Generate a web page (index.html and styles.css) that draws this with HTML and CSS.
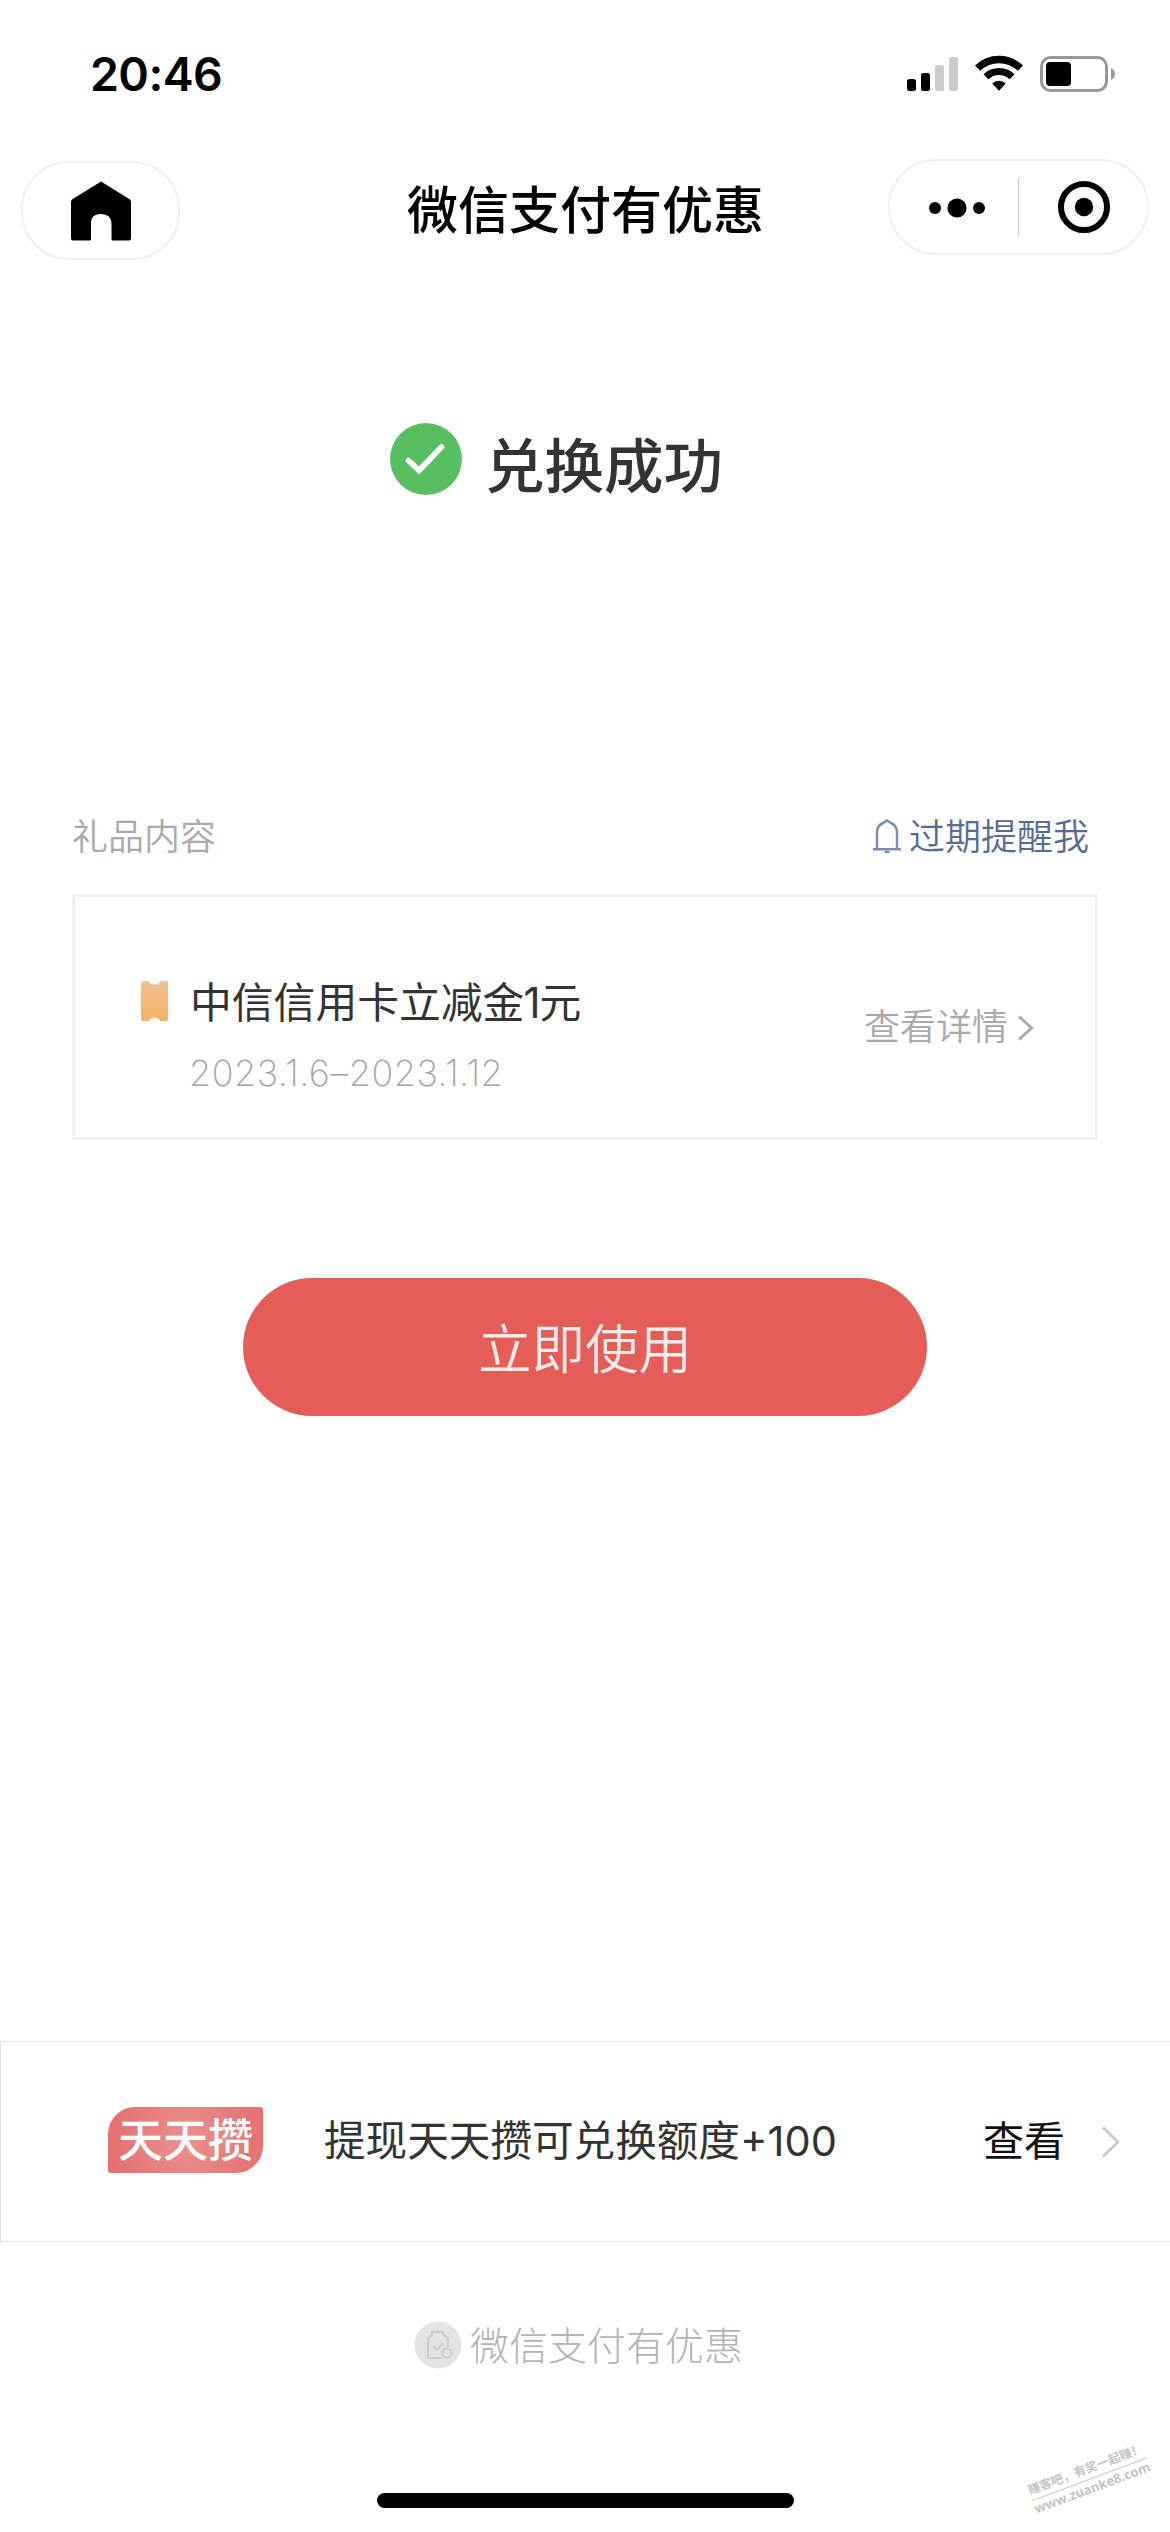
FILE: index.html
```html
<!DOCTYPE html>
<html lang="zh-CN">
<head>
<meta charset="utf-8">
<title>微信支付有优惠</title>
<link rel="stylesheet" href="styles.css">
</head>
<body>
<div class="screen">
  <header class="status">
    <span class="clock">20:46</span>
    <svg class="signal" width="52" height="36" viewBox="0 0 52 36">
      <rect x="0" y="22" width="9" height="12" rx="2.5"/>
      <rect x="14" y="16" width="9" height="18" rx="2.5"/>
      <rect x="28" y="8" width="9" height="26" rx="2.5" fill="#ccc"/>
      <rect x="42" y="0" width="9" height="34" rx="2.5" fill="#ccc"/>
    </svg>
    <svg class="wifi" width="48" height="36" viewBox="0 0 48 36">
      <path d="M2.6 13.2A30.5 30.5 0 0 1 45.4 13.2" fill="none" stroke="#000" stroke-width="7.4"/>
      <path d="M11 21.8A18.5 18.5 0 0 1 37 21.8" fill="none" stroke="#000" stroke-width="7"/>
      <path d="M17.2 28.6A9.8 9.8 0 0 1 30.8 28.6L24 35.8Z"/>
    </svg>
    <svg class="battery" width="76" height="36" viewBox="0 0 76 36">
      <rect x="1.5" y="1.5" width="65" height="33" rx="9" fill="none" stroke="#999" stroke-width="3"/>
      <rect x="6" y="6" width="25" height="24" rx="4"/>
      <path d="M71 12.2Q75 14 75 18T71 23.8Z" fill="#999"/>
    </svg>
  </header>

  <nav class="nav">
    <div class="home">
      <svg width="60" height="60" viewBox="0 0 60 60">
        <path d="M30 0.5L59 18.500Q60 19.500 60 21V57.500Q60 59.500 58 59.500H42Q40.500 59.500 40.500 58V43Q40.500 33 30 33T20 43V58Q20 59.500 18.500 59.500H2Q0 59.500 0 57.500V21Q0 19.500 1 18.500Z"/>
      </svg>
    </div>
    <h1 class="title">微信支付有优惠</h1>
    <div class="capsule">
      <svg class="dots" width="58" height="20" viewBox="0 0 58 20"><circle cx="7" cy="10" r="6"/><circle cx="29" cy="10" r="9.600"/><circle cx="51" cy="10" r="6"/></svg>
      <i class="divider"></i>
      <svg class="target" width="52" height="52" viewBox="0 0 52 52"><circle cx="26" cy="26" r="23" fill="none" stroke="#000" stroke-width="6"/><circle cx="26" cy="26" r="9.200"/></svg>
    </div>
  </nav>

  <section class="result">
    <svg width="72" height="72" viewBox="0 0 72 72"><circle cx="36" cy="36" r="36" fill="#58bf60"/><path d="M18.500 37.500L29 47.500L51.500 24" fill="none" stroke="#fff" stroke-width="5.500" stroke-linecap="round"/></svg>
    <h2 class="result-text">兑换成功</h2>
  </section>

  <section class="gift">
    <div class="gift-head">
      <span class="muted">礼品内容</span>
      <span class="remind">
        <svg width="30" height="34" viewBox="0 0 30 34" fill="none" stroke="#7d8cb0" stroke-width="2.400"><path d="M1 30.300H29M5 30V13.500Q5 6 12 3.500L15 1.500L18 3.500Q25 6 25 13.500V30"/><path d="M12.500 33H17.500"/></svg>
        过期提醒我
      </span>
    </div>
    <div class="card">
      <svg class="ticket" width="27" height="40" viewBox="0 0 27 39" preserveAspectRatio="none">
        <defs><linearGradient id="tk" x1="0" y1="0" x2="0" y2="1"><stop offset="0" stop-color="#f2c195"/><stop offset="1" stop-color="#f3b062"/></linearGradient></defs>
        <path d="M2 0H7.500Q9 3.500 13.500 3.500T19.500 0H25Q27 0 27 2V37Q27 39 25 39H19Q17.500 35.500 13.500 35.500T8 39H2Q0 39 0 37V2Q0 0 2 0Z" fill="url(#tk)"/>
      </svg>
      <div class="coupon">
        <div class="coupon-name">中信信用卡立减金<span class="num">1</span>元</div>
        <div class="coupon-date">2023.1.6–2023.1.12</div>
      </div>
      <div class="detail">查看详情
        <svg width="17" height="26" viewBox="0 0 17 26" fill="none" stroke="#aaa" stroke-width="3"><path d="M2 1.500L14.500 13L2 24.500"/></svg>
      </div>
    </div>
  </section>

  <button class="use">立即使用</button>

  <section class="promo">
    <span class="badge">天天攒</span>
    <span class="promo-text">提现天天攒可兑换额度<span class="num">+100</span></span>
    <span class="promo-link">查看</span>
    <svg width="18" height="32" viewBox="0 0 18 32" fill="none" stroke="#c8c8c8" stroke-width="2.600"><path d="M1 1.500L16 16L1 30.500"/></svg>
  </section>

  <footer class="brand">
    <svg width="48" height="48" viewBox="0 0 48 48"><circle cx="24" cy="24" r="23.500" fill="#e4e4e4"/><g fill="none" stroke="#cdcdcd" stroke-width="2"><path d="M28 37H14V19Q14 16 18 14V11H29V14Q34 16 34 19V26"/><path d="M19 25L23 29L29 22"/><circle cx="33" cy="32" r="4.500"/></g></svg>
    <span class="brand-name">微信支付有优惠</span>
  </footer>

  <div class="indicator"></div>
  <div class="watermark"><div class="wm-slogan">赚客吧，有奖一起赚！</div><div class="wm-url">www.zuanke8.com</div></div>
</div>
</body>
</html>
```
FILE: styles.css
```css
* { box-sizing: border-box; margin: 0; padding: 0; }
body { background: #fefefe; }
svg { display: block; flex: none; }

.screen {
  position: relative;
  width: 1170px;
  height: 2532px;
  overflow: hidden;
  display: flex;
  flex-direction: column;
  background: #fefefe;
  color: #333;
  font-family: "Noto Sans CJK SC", sans-serif;
  white-space: nowrap;
}

.status { display: flex; height: 148px; padding: 55px 55px 0 90px; }
.clock { margin-right: auto; font: 600 46.5px/39px Inter, sans-serif; letter-spacing: -0.6px; color: #000; }
.signal { margin: 2px 16px 0 0; }
.wifi { margin-right: 17px; }
.battery { margin-top: 1px; margin-right: -1px; }

.nav { display: flex; align-items: flex-start; height: 130px; padding: 11px 21px 0; justify-content: space-between; }
.home { display: flex; justify-content: center; width: 159px; height: 99px; margin-top: 2px; padding-top: 18px; border: 2px solid #f0f0f0; border-radius: 48px; }
.title { width: 400px; margin-left: 103px; text-align: center; margin-top: 11px; font-size: 51px; line-height: 74px; font-weight: 500; color: #000; }
.capsule { display: flex; align-items: center; width: 261px; height: 96px; border: 2px solid #f0f0f0; border-radius: 48px; }
.dots { margin-left: 38px; margin-top: 2px; }
.divider { width: 1px; height: 58px; margin-left: 32px; background: #ccc; }
.target { margin-left: 39px; }

.result { display: flex; height: 532px; padding: 145px 0 0 390px; }
.result-text { margin-left: 23px; font-size: 59.500px; font-weight: 500; line-height: 78px; }

.gift { padding: 0 72px; }
.gift-head { display: flex; justify-content: space-between; height: 84px; padding-right: 9px; font-size: 36px; line-height: 49px; }
.muted { color: #aaa; font-weight: 350; }
.remind { display: flex; gap: 7px; color: #576b95; font-weight: 350; }
.remind svg { margin-top: 9px; }
.card { display: flex; height: 246px; padding: 0 61px 0 66px; border: 3px solid #f1f1f1; }
.ticket { margin-top: 84px; }
.coupon { margin-left: 22px; }
.coupon-name { margin-top: 73px; font-size: 41.800px; line-height: 60px; }
.num { font-family: Inter, sans-serif; font-weight: 400; }
.coupon-name .num { margin: 0 -1px; }
.coupon-date { margin-top: 15px; margin-left: -1px; font: 250 36px/50px Inter, sans-serif; letter-spacing: 0.5px; color: #a4a4a4; }
.detail { display: flex; gap: 9px; margin: 102px 0 0 auto; font-size: 36px; font-weight: 350; line-height: 50px; height: 50px; color: #aaa; }
.detail svg { margin-top: 16px; }

.use { width: 684px; height: 138px; margin: 138px auto 0; padding-bottom: 3px; border: 0; border-radius: 69px; background: #e45e57; color: #ffecea; font: 350 53.500px/80px "Noto Sans CJK SC", sans-serif; }

.promo { display: flex; align-items: center; height: 201px; margin-top: 625px; padding: 0 50px 0 107px; border: 1px solid #e3e3e3; border-right: 0; }
.badge { width: 155px; height: 66px; margin-bottom: 4px; border-radius: 27px 3px 27px 3px; background: radial-gradient(circle, #eb9290, #e46e6d); color: #fff; font-size: 45px; font-weight: 500; line-height: 62px; text-align: center; }
.promo-text { margin-left: 61px; margin-bottom: 7px; font-size: 41.600px; }
.promo-link { margin-left: auto; margin-bottom: 7px; font-size: 41px; color: #111; }
.promo svg { margin-left: 37px; }

.brand { display: flex; gap: 8px; margin-top: 79px; padding-left: 414px; font-size: 39px; font-weight: 300; line-height: 48px; color: #b4b4b4; }
.brand-name { line-height: 44px; }

.indicator { position: absolute; left: 377px; bottom: 24px; width: 417px; height: 15px; border-radius: 8px; background: #000; }
.watermark { position: absolute; left: 1023px; top: 2460px; width: 132px; text-align: center; transform: rotate(-20.500deg); color: #c4c4c4; }
.wm-slogan { width: 122px; margin: 0 auto; height: 20px; border-bottom: 1px solid #ccc; font-size: 12.200px; line-height: 17px; font-weight: 700; text-spacing-trim: space-all; }
.wm-url { font: 700 13px/17px "Open Sans", sans-serif; }
```
